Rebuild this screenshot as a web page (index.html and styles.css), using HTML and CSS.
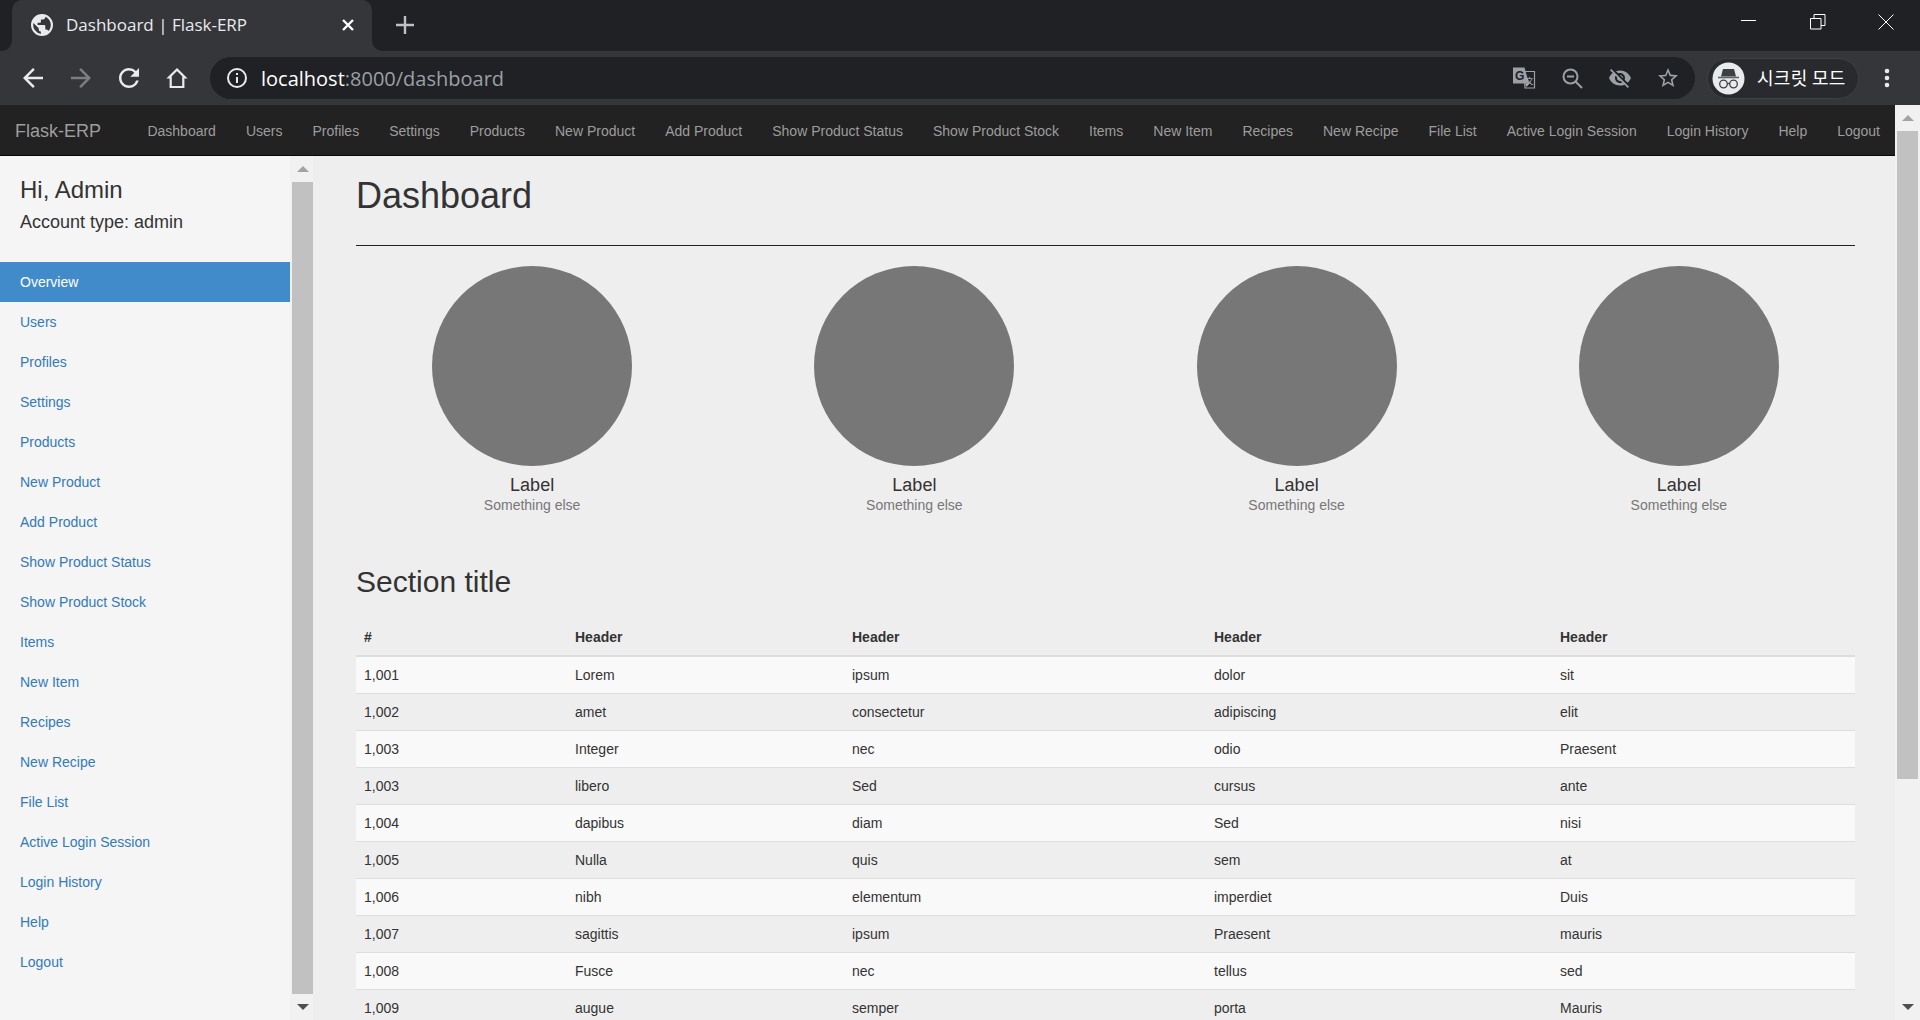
FILE: index.html
```html
<!doctype html>
<html>
  <head>
    <meta charset="utf-8">
    <title>Dashboard | Flask-ERP</title>
    <link rel="stylesheet" href="styles.css">
  </head>
  <body>
    <div class="tab-strip">
      <div class="tab">
        <svg class="favicon" viewBox="2 2 20 20"><path fill="#e8eaed" d="M12 2a10 10 0 1 0 0 20 10 10 0 0 0 0-20zM11 19.900A8 8 0 0 1 4.200 10.200L9 15v1c0 1.100.9 2 2 2v1.900zm6.900-2.500A2 2 0 0 0 16 16h-1v-3c0-.55-.45-1-1-1H8v-2h2c.55 0 1-.45 1-1V7h2c1.100 0 2-.9 2-2v-.4a8 8 0 0 1 2.900 12.800z"/></svg>
        <span class="tab-title">Dashboard | Flask-ERP</span>
        <svg class="tab-close" viewBox="0 0 12 12"><path stroke="#fff" stroke-width="2.400" d="M1 1l10 10M11 1L1 11"/></svg>
      </div>
      <svg class="new-tab" viewBox="0 0 18 18"><path stroke="#bdc1c6" stroke-width="2.400" d="M9 0v18M0 9h18"/></svg>
      <div class="window-controls">
        <svg viewBox="0 0 16 16"><path stroke="#fff" d="M0 6.500h15"/></svg>
        <svg viewBox="0 0 16 16"><path fill="none" stroke="#fff" d="M.5 4.500h10.500v10.500H.5zM4 4.500V.5h11v11h-4"/></svg>
        <svg viewBox="0 0 16 16"><path stroke="#fff" d="M.5.5l15 15M15.500.5l-15 15"/></svg>
      </div>
    </div>

    <div class="toolbar">
      <svg class="nav-icon" viewBox="0 0 24 24"><path fill="#e8eaed" d="M20 11H7.830l5.590-5.590L12 4l-8 8 8 8 1.410-1.410L7.830 13H20v-2z"/></svg>
      <svg class="nav-icon" viewBox="0 0 24 24"><path fill="#7b7d80" d="M4 11h12.170l-5.590-5.590L12 4l8 8-8 8-1.410-1.410L16.170 13H4v-2z"/></svg>
      <svg class="nav-icon" viewBox="0 0 24 24"><path fill="#e8eaed" d="M17.650 6.350A7.958 7.958 0 0 0 12 4c-4.420 0-7.990 3.580-7.990 8s3.570 8 7.990 8c3.730 0 6.840-2.550 7.730-6h-2.080A5.990 5.990 0 0 1 12 18c-3.310 0-6-2.690-6-6s2.690-6 6-6c1.660 0 3.140.690 4.220 1.780L13 11h7V4l-2.350 2.350z"/></svg>
      <svg class="nav-icon" viewBox="0 0 30 30"><path fill="none" stroke="#e8eaed" stroke-width="2.200" d="M15 6.500L7 14.500h1.700V24h12.600v-9.500H23z"/></svg>
      <div class="omnibox">
        <svg class="icon" viewBox="0 0 24 24"><circle cx="12" cy="12" r="9" fill="none" stroke="#e8eaed" stroke-width="2"/><path fill="#e8eaed" d="M11 11h2v6h-2zM11 7h2v2h-2z"/></svg>
        <div class="url"><span class="url-host">localhost</span>:8000/dashboard</div>
        <div class="omnibox-actions">
          <svg class="icon" viewBox="0 0 24 24"><path fill="none" stroke="#9aa0a6" stroke-width="1.200" d="M12 5.500h10.500v16.500H13z"/><path fill="#9aa0a6" d="M1 1.500h11.500l4.500 16H1z"/><path fill="#9aa0a6" d="M13 17.500h4.500L14.500 21z"/><text class="translate-g" x="3" y="13.500">G</text><text class="translate-x" x="13.500" y="18">文</text></svg>
          <svg class="icon" viewBox="0 0 24 24"><circle cx="10.500" cy="10.500" r="7" fill="none" stroke="#9aa0a6" stroke-width="2"/><path stroke="#9aa0a6" stroke-width="2" d="M7 10.500h7M15.500 15.500l6.500 6.500"/></svg>
          <svg class="icon" viewBox="0 0 24 24"><path fill="#9aa0a6" d="M12 7c2.760 0 5 2.240 5 5 0 .650-.130 1.260-.360 1.830l2.920 2.920c1.510-1.260 2.700-2.890 3.430-4.750-1.730-4.390-6-7.500-11-7.500-1.400 0-2.740.250-3.980.700l2.160 2.160C10.740 7.130 11.350 7 12 7zM2 4.270l2.280 2.280.460.460C3.080 8.300 1.780 10.020 1 12c1.730 4.390 6 7.500 11 7.500 1.550 0 3.030-.300 4.380-.840l.420.420L19.730 22 21 20.730 3.270 3 2 4.270zM7.530 9.800l1.550 1.550c-.050.210-.080.430-.080.650 0 1.660 1.340 3 3 3 .220 0 .440-.030.650-.080l1.550 1.550c-.670.330-1.410.530-2.200.530-2.760 0-5-2.240-5-5 0-.790.200-1.530.530-2.200zm4.310-.780l3.150 3.150.020-.160c0-1.660-1.340-3-3-3l-.170.010z"/></svg>
          <svg class="icon" viewBox="0 0 24 24"><path fill="#9aa0a6" d="M22 9.240l-7.190-.620L12 2 9.190 8.630 2 9.240l5.460 4.730L5.820 21 12 17.270 18.180 21l-1.630-7.030L22 9.240zM12 15.400l-3.760 2.270 1-4.280-3.320-2.880 4.380-.380L12 6.100l1.710 4.040 4.380.380-3.320 2.880 1 4.280L12 15.400z"/></svg>
        </div>
      </div>
      <div class="incognito">
        <svg class="incognito-avatar" viewBox="0 0 33 33"><circle cx="16.500" cy="16.500" r="16" fill="#e8eaed"/><path fill="#3c4043" d="M11 7h11l2 7.500H9z"/><path stroke="#5f6368" stroke-width="1.600" d="M6 15.500h21"/><circle cx="11.500" cy="22" r="3.800" fill="none" stroke="#3c4043" stroke-width="1.300"/><circle cx="21.500" cy="22" r="3.800" fill="none" stroke="#3c4043" stroke-width="1.300"/><path stroke="#3c4043" stroke-width="1.300" d="M15.300 21.500h2.400"/></svg>
        <span class="incognito-label">시크릿 모드</span>
      </div>
      <svg class="icon menu-dots" viewBox="0 0 24 24"><circle cx="12" cy="5" r="2.300" fill="#e8eaed"/><circle cx="12" cy="12" r="2.300" fill="#e8eaed"/><circle cx="12" cy="19" r="2.300" fill="#e8eaed"/></svg>
    </div>

    <div class="page">
      <div class="page-body">
        <nav class="navbar">
          <a class="navbar-brand">Flask-ERP</a>
          <ul class="navbar-links">
            <li>Dashboard</li>
            <li>Users</li>
            <li>Profiles</li>
            <li>Settings</li>
            <li>Products</li>
            <li>New Product</li>
            <li>Add Product</li>
            <li>Show Product Status</li>
            <li>Show Product Stock</li>
            <li>Items</li>
            <li>New Item</li>
            <li>Recipes</li>
            <li>New Recipe</li>
            <li>File List</li>
            <li>Active Login Session</li>
            <li>Login History</li>
            <li>Help</li>
            <li>Logout</li>
          </ul>
        </nav>

        <div class="content-row">
          <aside class="sidebar">
            <h3 class="sidebar-hi">Hi, Admin</h3>
            <h4 class="sidebar-type">Account type: admin</h4>
            <ul class="side-nav">
              <li class="active">Overview</li>
              <li>Users</li>
              <li>Profiles</li>
              <li>Settings</li>
              <li>Products</li>
              <li>New Product</li>
              <li>Add Product</li>
              <li>Show Product Status</li>
              <li>Show Product Stock</li>
              <li>Items</li>
              <li>New Item</li>
              <li>Recipes</li>
              <li>New Recipe</li>
              <li>File List</li>
              <li>Active Login Session</li>
              <li>Login History</li>
              <li>Help</li>
              <li>Logout</li>
            </ul>
          </aside>
          <div class="scrollbar side-scrollbar">
            <div class="scroll-btn"><div class="arrow-up"></div></div>
            <div class="scroll-thumb"></div>
            <div class="scroll-btn"><div class="arrow-down"></div></div>
          </div>

          <main class="main">
            <h1 class="page-header">Dashboard</h1>

            <div class="placeholders">
              <div class="placeholder">
                <div class="circle"></div>
                <h4>Label</h4>
                <span>Something else</span>
              </div>
              <div class="placeholder">
                <div class="circle"></div>
                <h4>Label</h4>
                <span>Something else</span>
              </div>
              <div class="placeholder">
                <div class="circle"></div>
                <h4>Label</h4>
                <span>Something else</span>
              </div>
              <div class="placeholder">
                <div class="circle"></div>
                <h4>Label</h4>
                <span>Something else</span>
              </div>
            </div>

            <h2 class="sub-header">Section title</h2>

            <table class="table">
              <colgroup>
                <col class="col-id">
                <col class="col-a">
                <col class="col-b">
                <col class="col-c">
                <col>
              </colgroup>
              <thead>
                <tr><th>#</th><th>Header</th><th>Header</th><th>Header</th><th>Header</th></tr>
              </thead>
              <tbody>
                <tr><td>1,001</td><td>Lorem</td><td>ipsum</td><td>dolor</td><td>sit</td></tr>
                <tr><td>1,002</td><td>amet</td><td>consectetur</td><td>adipiscing</td><td>elit</td></tr>
                <tr><td>1,003</td><td>Integer</td><td>nec</td><td>odio</td><td>Praesent</td></tr>
                <tr><td>1,003</td><td>libero</td><td>Sed</td><td>cursus</td><td>ante</td></tr>
                <tr><td>1,004</td><td>dapibus</td><td>diam</td><td>Sed</td><td>nisi</td></tr>
                <tr><td>1,005</td><td>Nulla</td><td>quis</td><td>sem</td><td>at</td></tr>
                <tr><td>1,006</td><td>nibh</td><td>elementum</td><td>imperdiet</td><td>Duis</td></tr>
                <tr><td>1,007</td><td>sagittis</td><td>ipsum</td><td>Praesent</td><td>mauris</td></tr>
                <tr><td>1,008</td><td>Fusce</td><td>nec</td><td>tellus</td><td>sed</td></tr>
                <tr><td>1,009</td><td>augue</td><td>semper</td><td>porta</td><td>Mauris</td></tr>
              </tbody>
            </table>
          </main>
        </div>
      </div>

      <div class="scrollbar page-scrollbar">
        <div class="scroll-btn"><div class="arrow-up"></div></div>
        <div class="scroll-thumb"></div>
        <div class="scroll-rest"></div>
        <div class="scroll-btn"><div class="arrow-down"></div></div>
      </div>
    </div>
  </body>
</html>
```

FILE: styles.css
```css
* {
  box-sizing: border-box;
}

html,
body {
  height: 100%;
}

body {
  margin: 0;
  display: flex;
  flex-direction: column;
  height: 1020px;
  overflow: hidden;
  font-family: "Liberation Sans", Arial, sans-serif;
  font-size: 14px;
  line-height: 20px;
  color: #333;
  background-color: #eee;
}

ul {
  list-style: none;
  margin: 0;
  padding: 0;
}

/* browser chrome */
.tab-strip {
  flex: none;
  display: flex;
  align-items: center;
  height: 51px;
  padding-bottom: 1px;
  background-color: #202124;
}

.tab {
  position: relative;
  display: flex;
  align-items: center;
  width: 360px;
  height: 51px;
  margin-top: 1px;
  margin-left: 12px;
  padding: 0 18px 2px 19px;
  border-radius: 10px 10px 0 0;
  background-color: #35363a;
}

/* little flares at the bottom corners of the active tab */
.tab::before,
.tab::after {
  content: "";
  position: absolute;
  bottom: 0;
  width: 10px;
  height: 10px;
}

.tab::before {
  left: -10px;
  background: radial-gradient(circle at 0 0, #202124 9.500px, #35363a 10px);
}

.tab::after {
  right: -10px;
  background: radial-gradient(circle at 100% 0, #202124 9.500px, #35363a 10px);
}

.favicon {
  width: 22px;
  height: 22px;
}

.tab-title {
  flex: 1;
  margin-left: 13px;
  font-family: "Open Sans", sans-serif;
  font-size: 17px;
  color: #e8eaed;
}

.tab-close {
  width: 12px;
  height: 12px;
}

.new-tab {
  width: 18px;
  height: 18px;
  margin-left: 24px;
}

.window-controls {
  display: flex;
  gap: 52.500px;
  align-self: flex-start;
  margin-left: auto;
  padding: 14px 26px 0 0;
}

.window-controls svg {
  width: 16px;
  height: 16px;
}

.toolbar {
  flex: none;
  display: flex;
  align-items: center;
  gap: 18px;
  height: 54px;
  padding-left: 18px;
  background-color: #35363a;
}

.nav-icon {
  flex: none;
  width: 30px;
  height: 30px;
}

.icon {
  flex: none;
  width: 24px;
  height: 24px;
}

.omnibox {
  display: flex;
  align-items: center;
  width: 1485px;
  height: 42px;
  padding: 0 15px;
  border-radius: 21px;
  background-color: #202124;
}

.url {
  margin-left: 12px;
  padding-top: 1px;
  font-family: "Open Sans", sans-serif;
  font-size: 20px;
  color: #9aa0a6;
}

.url-host {
  color: #fff;
}

.omnibox-actions {
  display: flex;
  gap: 24px;
  margin-left: auto;
}

.translate-g {
  font-family: "Liberation Sans", sans-serif;
  font-size: 12px;
  font-weight: bold;
  fill: #202124;
}

.translate-x {
  font-family: "Noto Sans CJK SC", sans-serif;
  font-size: 8px;
  fill: #bdc1c6;
}

.incognito {
  display: flex;
  align-items: center;
  width: 152px;
  height: 41px;
  margin-left: -6px;
  padding-left: 4px;
  border: 1px solid #3f4145;
  border-radius: 21px;
  background-color: #292a2d;
}

.incognito-avatar {
  width: 33px;
  height: 33px;
}

.incognito-label {
  margin-left: 12px;
  padding-bottom: 2px;
  font-family: "Noto Sans CJK KR", sans-serif;
  font-size: 18px;
  letter-spacing: 0.300px;
  white-space: nowrap;
  color: #fff;
}

.menu-dots {
  margin-left: -2px;
}

/* page */
.page {
  flex: 1;
  display: flex;
  min-height: 0;
}

.page-body {
  flex: 1;
  display: flex;
  flex-direction: column;
  min-width: 0;
}

.navbar {
  flex: none;
  display: flex;
  align-items: center;
  height: 51px;
  padding: 1px 0 0 15px;
  background-color: #222;
  border-bottom: 1px solid #080808;
  color: #9d9d9d;
}

.navbar-brand {
  font-size: 18px;
}

.navbar-links {
  display: flex;
  margin-left: auto;
}

.navbar-links li {
  padding: 0 15px;
}

.content-row {
  flex: 1;
  display: flex;
  min-height: 0;
}

.sidebar {
  flex: none;
  width: 290px;
  padding-top: 21px;
  background-color: #f5f5f5;
}

.sidebar-hi {
  margin: 0 0 10px;
  padding-left: 20px;
  font-size: 24px;
  font-weight: 500;
  line-height: 26.400px;
}

.sidebar-type {
  margin: 0 0 29px;
  padding-left: 20px;
  font-size: 18px;
  font-weight: 500;
  line-height: 19.800px;
}

.side-nav li {
  height: 40px;
  padding: 10px 20px;
  color: #337ab7;
}

.side-nav .active {
  background-color: #428bca;
  color: #fff;
}

/* fake scrollbars */
.scrollbar {
  flex: none;
  display: flex;
  flex-direction: column;
  background-color: #f1f1f1;
}

.side-scrollbar {
  width: 23px;
  padding-left: 2px;
}

.page-scrollbar {
  width: 25px;
  padding: 0 2px;
}

.scroll-btn {
  flex: none;
  display: flex;
  align-items: center;
  justify-content: center;
  height: 26px;
}

.scroll-thumb {
  flex: 1;
  background-color: #c1c1c1;
}

.page-scrollbar .scroll-thumb {
  flex: none;
  height: 648px;
}

.scroll-rest {
  flex: 1;
}

.arrow-up {
  border-left: 6px solid transparent;
  border-right: 6px solid transparent;
  border-bottom: 6px solid #a3a3a3;
}

.arrow-down {
  border-left: 6px solid transparent;
  border-right: 6px solid transparent;
  border-top: 6px solid #505050;
}

/* main column */
.main {
  flex: 1;
  min-width: 0;
  padding: 20px 40px 0 43px;
  overflow: hidden;
}

.page-header {
  margin: 0 0 20px;
  padding-bottom: 29px;
  border-bottom: 1px solid #222;
  font-size: 36px;
  font-weight: 500;
  line-height: 39.600px;
}

.placeholders {
  display: grid;
  grid-template-columns: repeat(4, 382.250px);
  margin: 0 -15px 50px;
  text-align: center;
  color: #777;
}

.circle {
  width: 200px;
  height: 200px;
  margin: 0 auto 10px;
  border-radius: 50%;
  background-color: #777;
}

.placeholder h4 {
  margin: 0;
  font-size: 18px;
  font-weight: 500;
  line-height: 19.800px;
  color: #333;
}

.sub-header {
  margin: 20px 0 21px;
  font-size: 30px;
  font-weight: 500;
  line-height: 33px;
}

.table {
  width: 100%;
  table-layout: fixed;
  border-collapse: collapse;
}

.col-id {
  width: 211px;
}

.col-a {
  width: 277px;
}

.col-b {
  width: 362px;
}

.col-c {
  width: 346px;
}

.table th {
  padding: 8px;
  text-align: left;
  border-bottom: 2px solid #ddd;
}

.table td {
  padding: 8px;
  border-bottom: 1px solid #ddd;
}

.table tbody tr:nth-child(odd) {
  background-color: #f9f9f9;
}
```
